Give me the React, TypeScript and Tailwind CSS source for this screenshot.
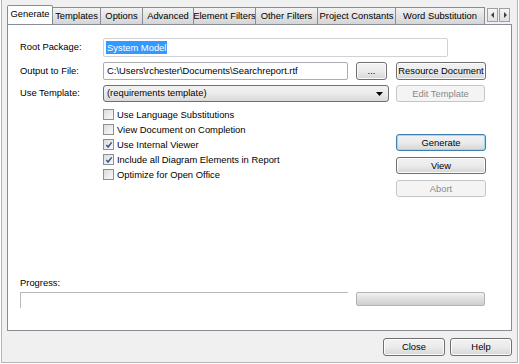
import React from 'react';

const font = { fontFamily: '"Liberation Sans", Arial, sans-serif' };

const tabs = [
  { label: 'Templates', w: 'w-[49px]' },
  { label: 'Options', w: 'w-[43px]' },
  { label: 'Advanced', w: 'w-[52px]' },
  { label: 'Element Filters', w: 'w-[63px]' },
  { label: 'Other Filters', w: 'w-[63px]' },
  { label: 'Project Constants', w: 'w-[79px]' },
  { label: 'Word Substitution', w: 'w-[90px]' },
];

function Btn({ label, w, h = 'h-[18px]', disabled, focused }: { label: string; w: string; h?: string; disabled?: boolean; focused?: boolean }) {
  const base = 'flex items-center justify-center rounded-[3px] border text-[9.4px] leading-none shrink-0 whitespace-nowrap';
  if (disabled) {
    return <div className={`${base} ${w} ${h} border-[#c3c6c9] bg-[#f4f4f4] text-[#8a8a8a]`}>{label}</div>;
  }
  return (
    <div
      className={`${base} ${w} ${h} ${focused ? 'border-[#3c7fb1] shadow-[inset_0_0_0_1px_#9fd8f6]' : 'border-[#707070] shadow-[inset_0_0_0_1px_#fcfcfc]'} bg-gradient-to-b from-[#f2f2f2] via-[#ebebeb] to-[#d6d6d6] text-black`}
    >
      {label}
    </div>
  );
}

function Check({ label, checked }: { label: string; checked?: boolean }) {
  return (
    <div className="flex items-center h-[15px] gap-[3px]">
      <div className="w-[11px] h-[11px] border border-[#8f8f8f] bg-gradient-to-br from-[#dcdcdc] to-[#fafafa] flex items-center justify-center shrink-0">
        {checked && (
          <svg width="8" height="8" viewBox="0 0 9 9">
            <path d="M1.5 4.5 L3.5 6.8 L7.5 1.5" fill="none" stroke="#3b4e8a" strokeWidth="1.6" />
          </svg>
        )}
      </div>
      <span className="text-[9.4px] leading-none text-black">{label}</span>
    </div>
  );
}

export default function App() {
  return (
    <div className="w-[519px] h-[364px] bg-white pl-[1px] pr-[1px] pb-[1px] overflow-hidden" style={font}>
      <div className="w-full h-full bg-[#f0f0f0] border-l border-r border-b border-[#b4b4b4] flex flex-col">
        {/* tab strip */}
        <div className="relative flex items-end h-[24px] pl-[5px] pt-[5px]">
          <div className="flex items-end w-[478px] overflow-hidden">
            <div className="relative z-10 w-[51px] h-[20px] -mb-[1px] pb-[2px] bg-white border border-b-0 border-[#898c95] rounded-t-[2px] flex items-center justify-center text-[9.4px] text-black">
              Generate
            </div>
            {tabs.map((t) => (
              <div
                key={t.label}
                className={`${t.w} h-[17px] shrink-0 -ml-[1px] first:ml-0 border border-b-0 border-[#898c95] bg-gradient-to-b from-[#f2f2f2] to-[#d5d5d5] flex items-center justify-center text-[9.4px] text-black whitespace-nowrap overflow-hidden`}
              >
                {t.label}
              </div>
            ))}
          </div>
          <div className="flex gap-[1px] ml-[2px] mb-[2px]">
            <div className="w-[11px] h-[14px] border border-[#a0a0a0] bg-gradient-to-b from-[#f6f6f6] to-[#e0e0e0] flex items-center justify-center">
              <svg width="4" height="6" viewBox="0 0 4 6"><path d="M3 0 L0 3 L3 6 Z" fill="#404040" /></svg>
            </div>
            <div className="w-[11px] h-[14px] border border-[#a0a0a0] bg-gradient-to-b from-[#f6f6f6] to-[#e0e0e0] flex items-center justify-center">
              <svg width="4" height="6" viewBox="0 0 4 6"><path d="M1 0 L4 3 L1 6 Z" fill="#404040" /></svg>
            </div>
          </div>
        </div>

        {/* panel */}
        <div className="ml-[5px] w-[505px] h-[307px] bg-white border border-[#898c95] flex flex-col pt-[13px] pl-[12px]">
          <div className="flex items-center h-[19px]">
            <div className="w-[83px] text-[9.4px] text-black">Root Package:</div>
            <div className="w-[345px] h-[19px] border border-[#cfd3d8] rounded-[2px] flex items-center pl-[2px]">
              <span className="bg-[#3399ff] text-white text-[9.4px] leading-[13px] px-[1px]">System Model</span>
            </div>
          </div>

          <div className="flex items-center h-[18px] mt-[5px]">
            <div className="w-[83px] text-[9.4px] text-black">Output to File:</div>
            <div className="w-[245px] h-[18px] border border-[#abadb3] rounded-[2px] flex items-center pl-[3px] text-[9.4px] text-black">
              C:\Users\rchester\Documents\Searchreport.rtf
            </div>
            <div className="ml-[8px]"><Btn label="..." w="w-[31px]" /></div>
            <div className="ml-[9px]"><Btn label="Resource Document" w="w-[90px]" /></div>
          </div>

          <div className="flex items-center h-[17px] mt-[5px]">
            <div className="w-[83px] text-[9.4px] text-black">Use Template:</div>
            <div className="w-[286px] h-[17px] border border-[#707070] rounded-[3px] bg-gradient-to-b from-[#f2f2f2] via-[#ebebeb] to-[#d9d9d9] flex items-center pl-[3px] pr-[5px] text-[9.4px] text-black">
              <span className="flex-1">(requirements template)</span>
              <svg width="7" height="4" viewBox="0 0 7 4"><path d="M0 0 L7 0 L3.5 4 Z" fill="#000" /></svg>
            </div>
            <div className="ml-[7px]"><Btn label="Edit Template" w="w-[89px]" h="h-[17px]" disabled /></div>
          </div>

          <div className="flex mt-[5px] ml-[83px]">
            <div className="w-[293px] flex flex-col">
              <Check label="Use Language Substitutions" />
              <Check label="View Document on Completion" />
              <Check label="Use Internal Viewer" checked />
              <Check label="Include all Diagram Elements in Report" checked />
              <Check label="Optimize for Open Office" />
            </div>
            <div className="flex flex-col gap-[6px] pt-[27px]">
              <Btn label="Generate" w="w-[90px]" h="h-[17px]" focused />
              <Btn label="View" w="w-[90px]" h="h-[17px]" />
              <Btn label="Abort" w="w-[90px]" h="h-[17px]" disabled />
            </div>
          </div>

          <div className="mt-auto pb-[22px]">
            <div className="text-[9.4px] text-black leading-none mb-[5px]">Progress:</div>
            <div className="flex items-start">
              <div className="w-[328px] h-[16px] border-t border-l border-[#b9b9b9]" />
              <div className="ml-[8px] w-[129px] h-[14px] rounded-[2px] border border-[#b2b2b2] bg-gradient-to-b from-[#f3f3f3] via-[#dedede] to-[#cfcfcf]" />
            </div>
          </div>
        </div>

        {/* bottom buttons */}
        <div className="flex justify-end gap-[5px] pr-[5px] mt-[7px]">
          <Btn label="Close" w="w-[62px]" />
          <Btn label="Help" w="w-[62px]" />
        </div>
      </div>
    </div>
  );
}
